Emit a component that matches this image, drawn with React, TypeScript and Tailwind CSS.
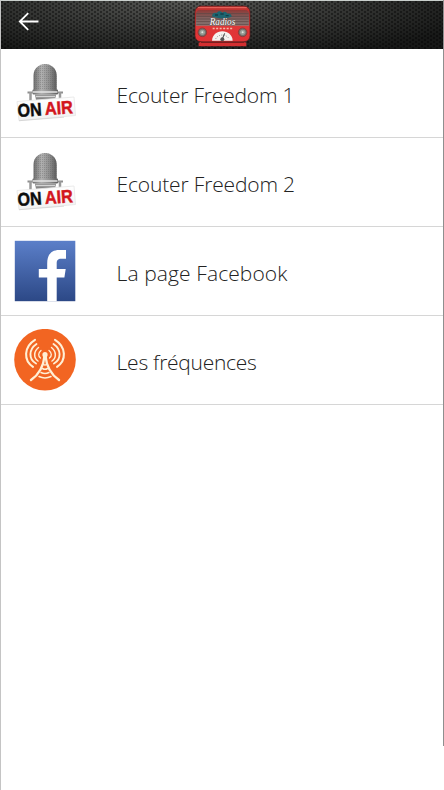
import type { ReactNode } from "react";

function BackArrow() {
  return (
    <svg width="22" height="20" viewBox="0 0 22 20" fill="none" stroke="#fff" strokeWidth="1.8">
      <path d="M20.5 9.500H1.800M10.200 1.200 1.800 9.500l8.400 8.400" />
    </svg>
  );
}

function RadioLogo() {
  return (
    <svg width="60" height="44" viewBox="580 12 180 132">
      <defs>
        <linearGradient id="body" x1="0" y1="0" x2="0" y2="1">
          <stop offset="0" stopColor="#b9322f" />
          <stop offset="0.5" stopColor="#df3838" />
          <stop offset="1" stopColor="#e23336" />
        </linearGradient>
        <linearGradient id="grille" x1="0" y1="0" x2="0" y2="1">
          <stop offset="0" stopColor="#8e3936" />
          <stop offset="0.5" stopColor="#826260" />
          <stop offset="1" stopColor="#8d7a77" />
        </linearGradient>
      </defs>
      <path d="M612 122h114l14 6v11H597v-11z" fill="#d42f31" />
      <path d="M604 127h130" stroke="#6d1d1e" strokeWidth="3" />
      <rect x="586" y="18" width="165" height="107" rx="18" fill="url(#body)" stroke="#5e1c1c" strokeWidth="2" />
      <path d="M596 23h144" stroke="#ec6a62" strokeWidth="3" strokeLinecap="round" />
      <path d="M589 42q0-12 12-12h135q12 0 12 12v35H589z" fill="url(#grille)" />
      <path d="M590 41h157M590 49h157M590 57h157M590 65h157M590 73h157" stroke="#5f4846" strokeWidth="2.500" />
      <path d="M637 49c0-9 8-12 14-10 5-8 13-6 17-1 6-5 13-3 15 3 8-1 13 3 13 9-18 7-42 7-59-1z" fill="#1d6570" />
      <path d="M646 45h9M662 42h10M678 47h9" stroke="#123f49" strokeWidth="4" />
      <text
        x="630"
        y="76"
        textLength="77"
        lengthAdjust="spacingAndGlyphs"
        fontFamily="Liberation Serif, serif"
        fontSize="31"
        fontStyle="italic"
        fill="#fff"
        stroke="#5d4a48"
        strokeWidth="2"
        paintOrder="stroke"
      >
        Radios
      </text>
      <path d="M639 85.500h59" stroke="#f6b9a6" strokeWidth="5" strokeDasharray="6 4.500" />
      <circle cx="608" cy="97" r="13" fill="#74706b" stroke="#8d2a29" strokeWidth="2" />
      <circle cx="608" cy="97" r="8" fill="#9a9f98" />
      <circle cx="608" cy="97" r="3" fill="#dfe3dc" />
      <circle cx="729" cy="97" r="13" fill="#74706b" stroke="#8d2a29" strokeWidth="2" />
      <circle cx="729" cy="97" r="8" fill="#9a9f98" />
      <circle cx="729" cy="97" r="3" fill="#dfe3dc" />
      <path d="M637 122c1-17 14-28 31-28s30 11 31 28z" fill="#f5f3f0" />
      <path d="M648 117a21 17 0 0 1 40 0" fill="none" stroke="#8b8b8b" strokeWidth="3" strokeDasharray="3 4" />
      <path d="m667 119 8-19" stroke="#444" strokeWidth="3" />
      <circle cx="668" cy="118" r="6" fill="#555" />
    </svg>
  );
}

function OnAirIcon() {
  return (
    <svg className="size-[62px]" viewBox="0 0 62 62">
      <defs>
        <linearGradient id="metal" x1="0" x2="1" y1="0" y2="0">
          <stop offset="0" stopColor="#6d6d6d" />
          <stop offset="0.35" stopColor="#b0b0b0" />
          <stop offset="0.7" stopColor="#8c8c8c" />
          <stop offset="1" stopColor="#5c5c5c" />
        </linearGradient>
        <linearGradient id="sign" x1="0" x2="0" y1="0" y2="1">
          <stop offset="0" stopColor="#fff" />
          <stop offset="1" stopColor="#f1f1f1" />
        </linearGradient>
        <pattern id="mesh" width="2" height="2" patternUnits="userSpaceOnUse">
          <rect width="1" height="1" fill="#555" opacity="0.3" />
        </pattern>
      </defs>
      <path d="M19.500 28V13.500a11.600 11.600 0 0 1 23.200 0V28z" fill="url(#metal)" />
      <path d="M19.500 28V13.500a11.600 11.600 0 0 1 23.200 0V28z" fill="url(#mesh)" />
      <rect x="18.500" y="27.500" width="25.500" height="5" rx="1" fill="url(#metal)" />
      <path d="M19 30h24.500" stroke="#e6e6e6" strokeWidth="1.500" />
      <path d="M21 32.500h21l-1 5.500H22z" fill="#858585" />
      <path d="M22 34.500h19" stroke="#d5d5d5" strokeWidth="1.500" />
      <path d="M13.500 30.500h5M44 30.500h5" stroke="#8d8d8d" strokeWidth="2" />
      <path d="M16.500 30v9M46 30v7" stroke="#9a9a9a" strokeWidth="2.500" />
      <path d="m3 39.500 57-4.500 1.500 18.500L5 58.700z" fill="url(#sign)" stroke="#e6e6e6" strokeWidth="0.800" />
      <path d="m5 58.700 45-3.500" stroke="#cfcfcf" strokeWidth="0.700" />
      <g transform="rotate(-4 4 55)" fontFamily="Liberation Sans, Arial, sans-serif" fontSize="18.300" fontWeight="bold" strokeWidth="0.500">
        <text x="4" y="55" textLength="24" lengthAdjust="spacingAndGlyphs" fill="#0c0c0c" stroke="#0c0c0c">ON</text>
        <text x="31.300" y="55" textLength="28" lengthAdjust="spacingAndGlyphs" fill="#d3161d" stroke="#d3161d">AIR</text>
      </g>
    </svg>
  );
}

function FacebookIcon() {
  return (
    <svg className="size-[62px]" viewBox="0 0 62 62">
      <defs>
        <linearGradient id="fb" x1="0" y1="0" x2="0" y2="1">
          <stop offset="0" stopColor="#5b7fc9" />
          <stop offset="1" stopColor="#2c4886" />
        </linearGradient>
      </defs>
      <rect x="0.800" y="0.800" width="60.500" height="60.400" fill="url(#fb)" />
      <path d="M33.200 61.200V37.500h-8.400V29h8.400v-5.500C33.200 14.500 37.500 10 45 10h7v8.700h-4.800c-3.400 0-4.500 1.500-4.500 4.600V29h9l-1.300 8.500h-7.700v23.700z" fill="#fff" />
    </svg>
  );
}

function AntennaIcon() {
  return (
    <svg className="size-[62px]" viewBox="0 0 62 62" fill="none" stroke="#fff0d6" strokeLinecap="round">
      <circle cx="31" cy="30.700" r="30.800" fill="#f26522" stroke="none" />
      <path d="M21 10.800c-11.500 7-11.500 21-2 27M41 10.800c11.500 7 11.500 21 2 27" strokeWidth="2.100" />
      <path d="M22.500 15c-8 5.500-8 15.500-.5 19.500M39.500 15c8 5.500 8 15.500 .5 19.500" strokeWidth="1.900" />
      <path d="M24.500 18.500c-5 4-5 10.500-.5 13.500M37.500 18.500c5 4 5 10.500 .5 13.500" strokeWidth="1.500" />
      <path d="M27 21.500c-3 2.500-3 5.500-.5 7.500M35 21.500c3 2.500 3 5.500 .5 7.500" strokeWidth="1.300" />
      <circle cx="31" cy="25.700" r="2.600" fill="#fff0d6" stroke="none" />
      <path d="M30.500 27c-1 11-5.500 18.500-13.500 24M31.500 27c1 11 5.500 18.500 13.500 24" strokeWidth="2.400" />
      <path d="M29.500 35.500q1.500 1 3 0M28.500 39.500q2.500 1.500 5 0M27 43.500q4 2 8 0M25 47.500q6 2.800 12 0" strokeWidth="1.500" />
    </svg>
  );
}

const items: { label: string; icon: ReactNode; tracking: string }[] = [
  { label: "Ecouter Freedom 1", icon: <OnAirIcon />, tracking: "tracking-[-0.2px]" },
  { label: "Ecouter Freedom 2", icon: <OnAirIcon />, tracking: "tracking-[-0.16px]" },
  { label: "La page Facebook", icon: <FacebookIcon />, tracking: "tracking-[0.1px]" },
  { label: "Les fréquences", icon: <AntennaIcon />, tracking: "tracking-[-0.26px]" },
];

export default function App() {
  return (
    <div className="flex h-[790px] w-[444px] overflow-hidden border-l border-[#c4c4c4] bg-white">
      <div className="flex min-w-0 flex-1 flex-col">
        <header className="flex h-[49px] shrink-0 items-start border-t border-[#c9cfcc] bg-[#1b1c1b] bg-[radial-gradient(circle_at_1px_1px,rgba(0,0,0,0.5)_0.6px,transparent_1.1px),radial-gradient(circle_at_4px_3px,rgba(0,0,0,0.5)_0.6px,transparent_1.1px),radial-gradient(ellipse_at_42%_0%,#555653_0%,#393a38_38%,#171817_85%)] bg-[size:6px_4px,6px_4px,100%_100%]">
          <button aria-label="Retour" className="mt-[11px] ml-[17px]">
            <BackArrow />
          </button>
          <div className="mt-[3px] ml-[153px]">
            <RadioLogo />
          </div>
        </header>
        <ul>
          {items.map(({ label, icon, tracking }) => (
            <li key={label} className="flex h-[89px] items-start border-b border-[#d6d6d6] pt-[13px] pl-[13px]">
              {icon}
              <span className={`mt-[19px] ml-[40.6px] font-['Open_Sans',sans-serif] text-[21px] leading-[29px] font-light text-[#222] ${tracking}`}>
                {label}
              </span>
            </li>
          ))}
        </ul>
      </div>
      <div className="h-[746px] w-px bg-[#8f8f8f]" />
    </div>
  );
}
